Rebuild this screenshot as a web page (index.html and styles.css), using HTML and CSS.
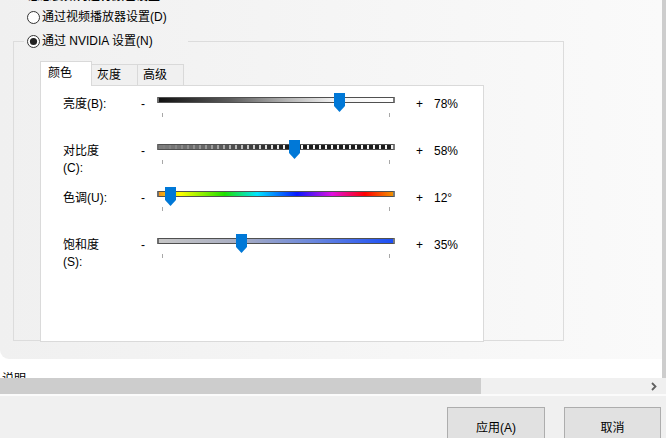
FILE: index.html
```html
<!DOCTYPE html>
<html lang="zh-CN">
<head>
<meta charset="utf-8">
<title>调整视频颜色设置</title>
<link rel="stylesheet" href="styles.css">
</head>
<body>
<div class="app">
  <div class="view">
    <div class="scroll-area">
      <div class="panel">
        <div class="heading">您想要如何进行颜色设置</div>
        <label class="radio-row">
          <svg class="radio" width="13" height="13" viewBox="0 0 13 13"><circle cx="6.5" cy="6.5" r="6" fill="#fff" stroke="#333" stroke-width="1"/></svg>
          <span>通过视频播放器设置(D)</span>
        </label>
        <fieldset class="group">
          <legend class="legend">
            <svg class="radio" width="13" height="13" viewBox="0 0 13 13"><circle cx="6.5" cy="6.5" r="6" fill="#fff" stroke="#333" stroke-width="1"/><circle cx="6.5" cy="6.5" r="3.6" fill="#222"/></svg>
            <span>通过 NVIDIA 设置(N)</span>
          </legend>
          <div class="tabbox">
            <div class="tabs">
              <div class="tab tab-active">颜色</div>
              <div class="tab">灰度</div>
              <div class="tab">高级</div>
            </div>
            <div class="tabpanel">
              <div class="row">
                <div class="label">亮度(B):</div>
                <div class="sign">-</div>
                <div class="slider">
                  <div class="track track-bright"></div>
                  <div class="ticks"><i></i><i></i></div>
                  <svg class="thumb" style="--v:.78" width="11" height="19" viewBox="0 0 11 19"><polygon points="0,0 11,0 11,13 5.5,19 0,13" fill="#0078d7"/></svg>
                </div>
                <div class="sign plus">+</div>
                <div class="value">78%</div>
              </div>
              <div class="row">
                <div class="label">对比度(C):</div>
                <div class="sign">-</div>
                <div class="slider">
                  <div class="track track-contrast"></div>
                  <div class="ticks"><i></i><i></i></div>
                  <svg class="thumb" style="--v:.58" width="11" height="19" viewBox="0 0 11 19"><polygon points="0,0 11,0 11,13 5.5,19 0,13" fill="#0078d7"/></svg>
                </div>
                <div class="sign plus">+</div>
                <div class="value">58%</div>
              </div>
              <div class="row">
                <div class="label">色调(U):</div>
                <div class="sign">-</div>
                <div class="slider">
                  <div class="track track-hue"></div>
                  <div class="ticks"><i></i><i></i></div>
                  <svg class="thumb" style="--v:.0333" width="11" height="19" viewBox="0 0 11 19"><polygon points="0,0 11,0 11,13 5.5,19 0,13" fill="#0078d7"/></svg>
                </div>
                <div class="sign plus">+</div>
                <div class="value">12°</div>
              </div>
              <div class="row">
                <div class="label">饱和度(S):</div>
                <div class="sign">-</div>
                <div class="slider">
                  <div class="track track-sat"></div>
                  <div class="ticks"><i></i><i></i></div>
                  <svg class="thumb" style="--v:.35" width="11" height="19" viewBox="0 0 11 19"><polygon points="0,0 11,0 11,13 5.5,19 0,13" fill="#0078d7"/></svg>
                </div>
                <div class="sign plus">+</div>
                <div class="value">35%</div>
              </div>
            </div>
          </div>
        </fieldset>
      </div>
      <div class="note">说明</div>
    </div>
    <div class="vbar"></div>
  </div>
  <div class="hscroll">
    <div class="hthumb"></div>
    <svg class="harrow" width="8" height="9" viewBox="0 0 8 9"><polyline points="2,1 5.5,4.5 2,8" fill="none" stroke="#606060" stroke-width="1.8"/></svg>
  </div>
  <div class="footer">
    <button class="btn btn-apply">应用(A)</button>
    <button class="btn btn-cancel">取消</button>
  </div>
</div>
</body>
</html>
```

FILE: styles.css
```css
html, body {
  margin: 0;
  padding: 0;
}
body {
  width: 666px;
  height: 438px;
  overflow: hidden;
  background: #fff;
  color: #000;
  font-family: "Liberation Sans", "Noto Sans CJK SC", sans-serif;
  font-size: 12px;
  line-height: 16px;
}
.app {
  display: flex;
  flex-direction: column;
  height: 438px;
}
.view {
  display: flex;
  height: 378px;
  flex: none;
}
.scroll-area {
  flex: 1;
  overflow: hidden;
  background: #fff;
}
.vbar {
  width: 4px;
  background: #cdcdcd;
}
.panel {
  height: 359px;
  overflow: hidden;
  background: linear-gradient(to right, #f0f0f0, #fafafa);
  border-bottom-left-radius: 9px;
}
.heading {
  margin: -12px 0 0 28px;
  height: 16px;
  font-weight: bold;
}
.radio-row {
  display: flex;
  align-items: center;
  gap: 2px;
  height: 16px;
  margin: 5px 0 0 27px;
}
.radio {
  display: block;
  flex: none;
}
.group {
  margin: 8px 0 0 13px;
  width: 551px;
  box-sizing: border-box;
  border: 1px solid #dcdcdc;
  padding: 12px 79px 0 10px;
  min-width: 0;
}
.legend {
  display: flex;
  align-items: center;
  gap: 2px;
  height: 16px;
  padding: 0 35px 0 3px;
}
.tabbox {
  margin-left: 16px;
}
.tabs {
  display: flex;
  align-items: flex-end;
  height: 24px;
}
.tab {
  box-sizing: border-box;
  width: 46px;
  height: 21px;
  padding: 2px 0 0 5px;
  border: 1px solid #d9d9d9;
  border-left: none;
  border-bottom: none;
  background: #f0f0f0;
}
.tab-active {
  position: relative;
  z-index: 1;
  width: 52px;
  height: 25px;
  margin-bottom: -1px;
  padding: 3px 0 0 7px;
  border-left: 1px solid #d9d9d9;
  background: #fff;
}
.tabpanel {
  box-sizing: border-box;
  height: 257px;
  margin-bottom: -2px;
  padding: 7px 0 0 22px;
  background: #fff;
  border: 1px solid #dadada;
}
.row {
  display: grid;
  grid-template-columns: 78px 16px 238px 39px auto;
  align-items: start;
  height: 47px;
}
.label,
.sign,
.value {
  margin-top: 3px;
  line-height: 17px;
}
.label {
  width: 54px;
}
.plus {
  padding-left: 21px;
}
.slider {
  position: relative;
  height: 24px;
}
.track {
  box-sizing: border-box;
  height: 6px;
  margin-top: 4px;
  border: 1px solid #505050;
  border-left: 2px solid #6e6e6e;
  border-right: 2px solid #7a7a7a;
  border-radius: 1px;
}
.track-bright {
  background: linear-gradient(to right, #111 0%, #5a5a5a 30%, #b5b5b5 55%, #f2f2f2 75%, #fff 100%);
}
.track-contrast {
  background:
    linear-gradient(to right, #7d7d7d 0%, rgba(125,125,125,.75) 22%, rgba(125,125,125,0) 55%),
    repeating-linear-gradient(to right, #1c1c1c 0 4px, #f2f2f2 4px 6px);
}
.track-hue {
  background: linear-gradient(to right, #f39419 0%, #ffff00 9%, #1fe000 28%, #00e4ff 42%, #0818ff 59%, #e010e0 74%, #ff0000 88%, #f29100 100%);
}
.track-sat {
  background: linear-gradient(to right, #c6c6c6 0%, #a8adc2 35%, #6c88dc 65%, #1c4ff6 100%);
}
.ticks {
  display: flex;
  justify-content: space-between;
  padding: 0 5px;
  margin-top: 10px;
}
.ticks i {
  display: block;
  width: 1px;
  height: 4px;
  background: #a8a8a8;
}
.thumb {
  position: absolute;
  top: 0;
  left: calc(227px * var(--v));
  display: block;
}
.note {
  margin: 12px 0 0 2px;
}
.hscroll {
  display: flex;
  align-items: center;
  justify-content: space-between;
  height: 16px;
  flex: none;
  background: #f0f0f0;
}
.hthumb {
  width: 481px;
  height: 16px;
  background: #cdcdcd;
}
.harrow {
  display: block;
  margin-right: 8px;
}
.footer {
  flex: 1;
  display: flex;
  justify-content: flex-end;
  align-items: flex-start;
  gap: 19px;
  padding: 11px 5px 0 0;
  border-top: 2px solid #fbfbfb;
  background: #f0f0f0;
}
.btn {
  box-sizing: border-box;
  height: 34px;
  padding: 8px 0 0;
  margin: 0;
  border: 1px solid #adadad;
  background: #e1e1e1;
  color: #000;
  font: inherit;
  line-height: 16px;
  text-align: center;
  vertical-align: top;
  display: block;
}
.btn-apply {
  width: 98px;
}
.btn-cancel {
  width: 97px;
}
```
